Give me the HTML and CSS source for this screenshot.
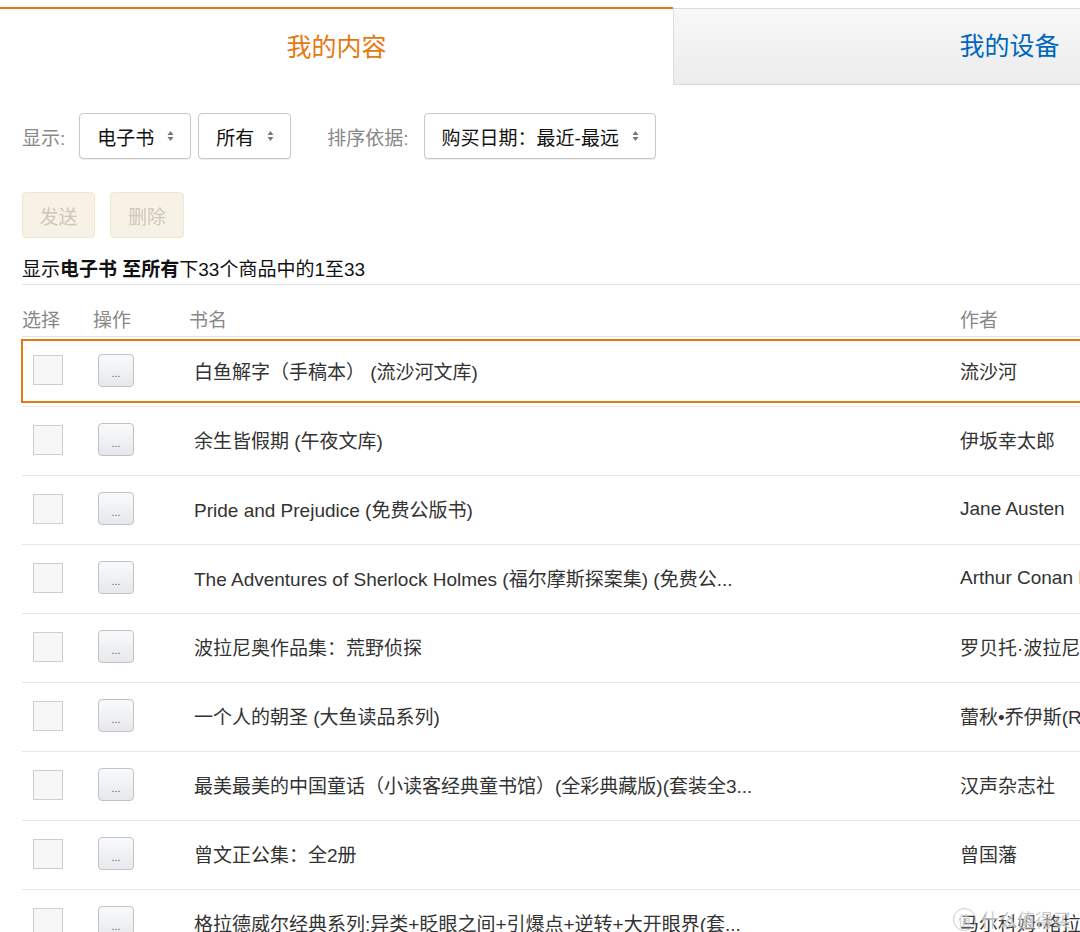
FILE: index.html
```html
<!DOCTYPE html>
<html lang="zh-CN">
<head>
  <meta charset="UTF-8">
  <title>管理我的内容和设备</title>
  <link rel="stylesheet" href="styles.css">
</head>
<body>
  <div class="page">

    <div class="tabs">
      <div class="tab active">我的内容</div>
      <div class="tab">我的设备</div>
    </div>

    <div class="filters">
      <span class="label">显示:</span>
      <div class="select">电子书 <svg class="arrows" width="7" height="12" viewBox="0 0 7 12"><path d="M3.5 1 L6.5 5 H0.5 Z M3.5 11 L6.5 7 H0.5 Z" fill="#777"/></svg></div>
      <div class="select">所有 <svg class="arrows" width="7" height="12" viewBox="0 0 7 12"><path d="M3.5 1 L6.5 5 H0.5 Z M3.5 11 L6.5 7 H0.5 Z" fill="#777"/></svg></div>
      <span class="label sort">排序依据:</span>
      <div class="select">购买日期：最近-最远 <svg class="arrows" width="7" height="12" viewBox="0 0 7 12"><path d="M3.5 1 L6.5 5 H0.5 Z M3.5 11 L6.5 7 H0.5 Z" fill="#777"/></svg></div>
    </div>

    <div class="actions">
      <button class="btn-disabled">发送</button>
      <button class="btn-disabled">删除</button>
    </div>

    <p class="summary">显示<b>电子书 至所有</b>下33个商品中的1至33</p>

    <div class="table">
      <div class="row head">
        <div>选择</div>
        <div>操作</div>
        <div class="title">书名</div>
        <div class="author">作者</div>
      </div>
      <div id="rows"></div>
    </div>

    <div class="watermark"><span class="wm-circle">值</span>什么值得买</div>
  </div>

  <script>
    const books = [
      ["白鱼解字（手稿本） (流沙河文库)", "流沙河"],
      ["余生皆假期 (午夜文库)", "伊坂幸太郎"],
      ["Pride and Prejudice (免费公版书)", "Jane Austen"],
      ["The Adventures of Sherlock Holmes (福尔摩斯探案集) (免费公...", "Arthur Conan Doyle"],
      ["波拉尼奥作品集：荒野侦探", "罗贝托·波拉尼奥"],
      ["一个人的朝圣 (大鱼读品系列)", "蕾秋•乔伊斯(Rachel Joyce)"],
      ["最美最美的中国童话（小读客经典童书馆）(全彩典藏版)(套装全3...", "汉声杂志社"],
      ["曾文正公集：全2册", "曾国藩"],
      ["格拉德威尔经典系列:异类+眨眼之间+引爆点+逆转+大开眼界(套...", "马尔科姆•格拉德威尔"]
    ];

    const rowsEl = document.getElementById('rows');
    books.forEach((b, i) => {
      const row = document.createElement('div');
      row.className = i === 0 ? 'row item selected' : 'row item';
      row.innerHTML =
        '<div><span class="check"></span></div>' +
        '<div><button class="more">...</button></div>' +
        '<div class="title">' + b[0] + '</div>' +
        '<div class="author">' + b[1] + '</div>';
      rowsEl.appendChild(row);
    });
  </script>
</body>
</html>
```

FILE: styles.css
```css
* {
  margin: 0;
  padding: 0;
  box-sizing: border-box;
}
html, body {
  overflow: hidden;
}
body {
  font-family: "Liberation Sans", Arial, "Noto Sans CJK SC", sans-serif;
  font-size: 19px;
  color: #111;
  background: #fff;
}
.page {
  width: 1346px;
  position: relative;
  height: 932px;
}

/* tabs */
.tabs {
  display: flex;
  margin-top: 7px;
}
.tab {
  width: 673px;
  display: flex;
  align-items: center;
  justify-content: center;
  font-size: 25px;
  color: #0066c0;
  height: 77px;
  margin-top: 1px;
  padding-bottom: 5px;
  background: linear-gradient(#f8f8f8, #ececec);
  border: 1px solid #dcdcdc;
}
.tab.active {
  color: #e47911;
  background: #fff;
  border: none;
  border-top: 2px solid #e47911;
  height: 78px;
  margin-top: 0;
}

/* filters */
.filters {
  display: flex;
  align-items: center;
  padding-left: 22px;
  margin-top: 28px;
}
.label {
  color: #888;
  margin-right: 14px;
}
.label.sort {
  margin-left: 29px;
  margin-right: 15px;
}
.select {
  display: flex;
  align-items: center;
  gap: 13px;
  height: 46px;
  padding: 0 16px 0 17px;
  border: 1px solid #c8c8c8;
  border-radius: 4px;
  background: #fff;
  margin-right: 7px;
  color: #111;
  box-shadow: 0 1px 0 #eee;
}

/* action buttons */
.actions {
  display: flex;
  gap: 15px;
  padding-left: 22px;
  margin-top: 33px;
}
.btn-disabled {
  height: 46px;
  width: 73px;
  font: inherit;
  font-size: 19px;
  color: #cfc7b8;
  background: #f8f2e6;
  border: 1px solid #efe6d2;
  border-radius: 4px;
}
.btn-disabled + .btn-disabled {
  width: 74px;
}

.summary {
  margin-left: 22px;
  margin-top: 20px;
  line-height: 24px;
  padding-bottom: 2px;
  border-bottom: 1px solid #e3e3e3;
}
.summary b {
  font-weight: bold;
}

/* table */
.table {
  margin-left: 22px;
}
.row {
  display: grid;
  grid-template-columns: 71px 96px 769px 1fr;
  align-items: center;
  white-space: nowrap;
}
.row.head {
  color: #888;
  line-height: 24px;
  padding-top: 24px;
  padding-bottom: 3px;
  border-bottom: 1px solid #e3e3e3;
}
.row.head .title {
  padding-left: 0;
}
.row.item {
  height: 69px;
  padding-bottom: 3px;
  border-bottom: 1px solid #e6e6e6;
  color: #333;
  position: relative;
}
.row.item.selected {
  height: 70px;
}
.row.item.selected::after {
  content: "";
  position: absolute;
  left: -1px;
  right: 0;
  top: 2px;
  bottom: 3px;
  border: 2px solid #e47911;
}
.title {
  padding-left: 5px;
}
.author {
  padding-left: 2px;
}
.check {
  display: block;
  width: 30px;
  height: 30px;
  margin-left: 11px;
  border: 1px solid #cdcdcd;
  background: #f7f7f7;
}
.more {
  display: block;
  width: 36px;
  height: 33px;
  margin-left: 5px;
  border: 1px solid #bfc2c6;
  border-radius: 4px;
  background: linear-gradient(#f9fafb, #e6e8eb);
  color: #6a5a70;
  font-size: 11px;
  font-family: "Liberation Sans", sans-serif;
  padding-top: 6px;
}

/* watermark */
.watermark {
  position: absolute;
  left: 953px;
  top: 899px;
  display: flex;
  align-items: center;
  gap: 5px;
  font-size: 18px;
  color: rgba(190, 190, 190, 0.8);
  text-shadow: 0 0 2px #fff;
}
.wm-circle {
  width: 23px;
  height: 23px;
  border: 1px solid rgba(190, 190, 190, 0.8);
  border-radius: 50%;
  font-size: 13px;
  display: flex;
  align-items: center;
  justify-content: center;
}
```
